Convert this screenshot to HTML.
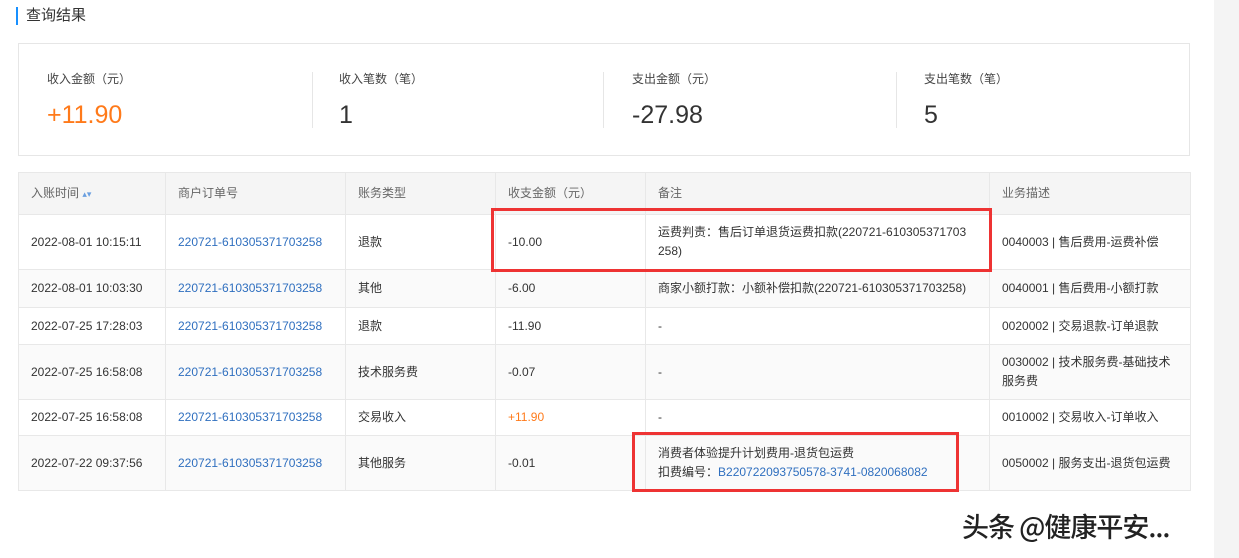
<!DOCTYPE html>
<html><head><meta charset="utf-8"><style>
*{margin:0;padding:0;box-sizing:border-box}
body{width:1239px;height:558px;background:#fff;font-family:"Liberation Sans","Noto Sans CJK SC",sans-serif;color:#333;position:relative;overflow:hidden}
.side{position:absolute;left:1214px;top:0;width:25px;height:558px;background:#f4f4f4}
.title{position:absolute;left:16px;top:7px;height:18px;border-left:2px solid #1890ff;padding-left:8px;font-size:15px;line-height:18px;color:#333}
.sum{position:absolute;left:18px;top:43px;width:1172px;height:113px;border:1px solid #e6e6e6}
.sum .c{position:absolute;top:27px}
.sum .l{font-size:12px;color:#444;line-height:16px}
.sum .v{font-size:25px;margin-top:14px;line-height:28px;color:#333}
.dv{position:absolute;top:28px;width:1px;height:56px;background:#e6e6e6}
table{position:absolute;left:18px;top:172px;border-collapse:collapse;font-size:12px;table-layout:fixed}
td,th{border:1px solid #e8e8e8;padding:0 12px;text-align:left;font-weight:normal;line-height:19px;vertical-align:middle}
th{background:#f5f5f5;color:#666;height:42px}
tr.g td{background:#fafafa}
.b{color:#2f6fbf}.o{color:#ff7a1a}
.red{position:absolute;border:3px solid #ee3333}
.wm{position:absolute;left:962px;top:506px;font-size:27px;color:#222;font-family:"Noto Sans CJK SC",sans-serif;font-weight:500;letter-spacing:-1px}
</style></head><body>
<div class="side"></div>
<div class="title">查询结果</div>
<div class="sum">
<div class="c" style="left:28px"><div class="l">收入金额（元）</div><div class="v" style="color:#ff7a1a">+11.90</div></div>
<div class="dv" style="left:293px"></div>
<div class="c" style="left:320px"><div class="l">收入笔数（笔）</div><div class="v">1</div></div>
<div class="dv" style="left:584px"></div>
<div class="c" style="left:613px"><div class="l">支出金额（元）</div><div class="v">-27.98</div></div>
<div class="dv" style="left:877px"></div>
<div class="c" style="left:905px"><div class="l">支出笔数（笔）</div><div class="v">5</div></div>
</div>
<table>
<colgroup><col style="width:147px"><col style="width:180px"><col style="width:150px"><col style="width:150px"><col style="width:344px"><col style="width:201px"></colgroup>
<tr><th>入账时间 <span style="color:#6a9fe0;font-size:9px">▴▾</span></th><th>商户订单号</th><th>账务类型</th><th>收支金额（元）</th><th>备注</th><th>业务描述</th></tr>
<tr style="height:55px"><td>2022-08-01 10:15:11</td><td class="b">220721-610305371703258</td><td>退款</td><td>-10.00</td><td>运费判责：售后订单退货运费扣款(220721-610305371703<br>258)</td><td>0040003 | 售后费用-运费补偿</td></tr>
<tr class="g" style="height:38px"><td>2022-08-01 10:03:30</td><td class="b">220721-610305371703258</td><td>其他</td><td>-6.00</td><td>商家小额打款：小额补偿扣款(220721-610305371703258)</td><td>0040001 | 售后费用-小额打款</td></tr>
<tr style="height:37px"><td>2022-07-25 17:28:03</td><td class="b">220721-610305371703258</td><td>退款</td><td>-11.90</td><td>-</td><td>0020002 | 交易退款-订单退款</td></tr>
<tr class="g" style="height:55px"><td>2022-07-25 16:58:08</td><td class="b">220721-610305371703258</td><td>技术服务费</td><td>-0.07</td><td>-</td><td>0030002 | 技术服务费-基础技术服务费</td></tr>
<tr style="height:36px"><td>2022-07-25 16:58:08</td><td class="b">220721-610305371703258</td><td>交易收入</td><td class="o">+11.90</td><td>-</td><td>0010002 | 交易收入-订单收入</td></tr>
<tr class="g" style="height:55px"><td>2022-07-22 09:37:56</td><td class="b">220721-610305371703258</td><td>其他服务</td><td>-0.01</td><td>消费者体验提升计划费用-退货包运费<br>扣费编号：<span class="b">B220722093750578-3741-0820068082</span></td><td>0050002 | 服务支出-退货包运费</td></tr>
</table>
<div class="red" style="left:491px;top:208px;width:501px;height:64px"></div>
<div class="red" style="left:632px;top:432px;width:327px;height:60px"></div>
<div class="wm">头条 @健康平安...</div>
</body></html>
